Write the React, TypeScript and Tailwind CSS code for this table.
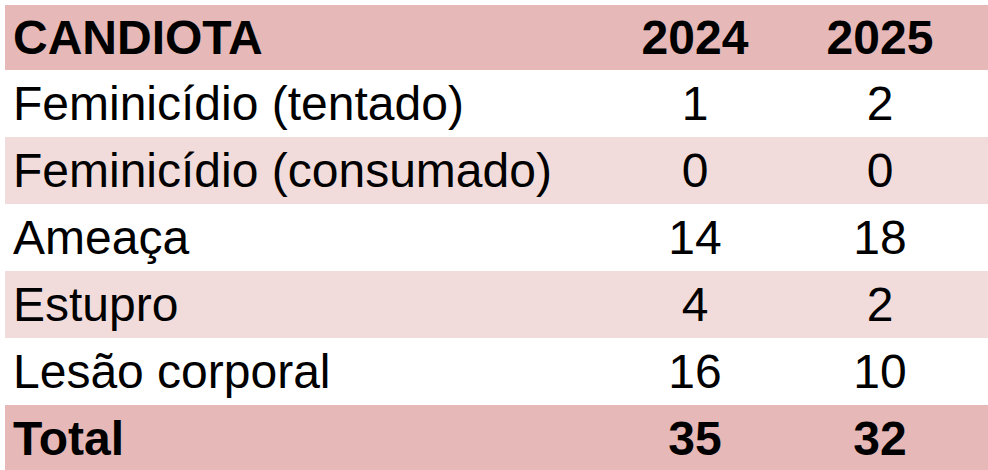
const rows = [
  { label: "Feminicídio (tentado)", a: "1", b: "2", tone: "white" },
  { label: "Feminicídio (consumado)", a: "0", b: "0", tone: "light" },
  { label: "Ameaça", a: "14", b: "18", tone: "white" },
  { label: "Estupro", a: "4", b: "2", tone: "light" },
  { label: "Lesão corporal", a: "16", b: "10", tone: "white" },
];

function Row({
  label,
  a,
  b,
  bg,
  bold = false,
  height = "h-[67px]",
}: {
  label: string;
  a: string;
  b: string;
  bg: string;
  bold?: boolean;
  height?: string;
}) {
  return (
    <div
      className={`flex items-center ${height} ${bg} pl-[8px] text-[48px] leading-none text-black ${bold ? "font-bold" : ""}`}
    >
      <div className="w-[592px] whitespace-nowrap">{label}</div>
      <div className="w-[180px] text-center">{a}</div>
      <div className="w-[190px] text-center">{b}</div>
    </div>
  );
}

export default function App() {
  return (
    <div className="h-[470px] w-[988px] overflow-hidden bg-white pl-[5px] pt-[5px] font-['Liberation_Sans',Arial,sans-serif]">
      <div className="w-[990px]">
        <Row
          label="CANDIOTA"
          a="2024"
          b="2025"
          bg="bg-[#e6b8b7]"
          bold
          height="h-[65px]"
        />
        {rows.map((r) => (
          <Row
            key={r.label}
            label={r.label}
            a={r.a}
            b={r.b}
            bg={r.tone === "light" ? "bg-[#f2dcdb]" : "bg-white"}
          />
        ))}
        <Row label="Total" a="35" b="32" bg="bg-[#e6b8b7]" bold />
      </div>
    </div>
  );
}
